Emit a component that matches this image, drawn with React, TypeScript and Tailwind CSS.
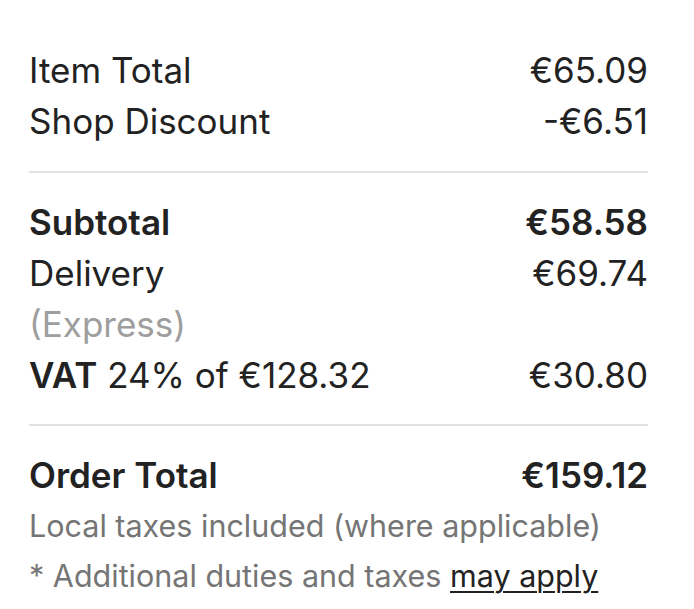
import React from "react"

type Line = {
  label: React.ReactNode
  value?: string
  bold?: boolean
}

const Row: React.FC<Line> = ({ label, value, bold }) => (
  <div className={`flex justify-between ${bold ? "font-semibold" : ""}`}>
    <span>{label}</span>
    {value && <span>{value}</span>}
  </div>
)

const App: React.FC = () => {
  return (
    <div
      className="bg-white w-[694px] h-[609px] pl-[29px] pr-[46px] pt-[45px] text-[#222222] text-[35px] leading-[51px]"
      style={{ fontFamily: "Inter, 'Liberation Sans', sans-serif" }}
    >
      <Row label="Item Total" value="€65.09" />
      <Row label="Shop Discount" value="-€6.51" />

      <div className="h-[2px] bg-[#e1e1e1] mt-[24px] mb-[24px]"></div>

      <Row label="Subtotal" value="€58.58" bold />
      <Row label="Delivery" value="€69.74" />
      <div className="text-[#9e9e9e]">(Express)</div>
      <Row
        label={
          <>
            <span className="font-semibold">VAT</span> 24% of €128.32
          </>
        }
        value="€30.80"
      />

      <div className="h-[2px] bg-[#e1e1e1] mt-[23px] mb-[24px]"></div>

      <Row label="Order Total" value="€159.12" bold />
      <div className="text-[#757575] text-[30.5px] leading-[50px] whitespace-nowrap">
        <div>Local taxes included (where applicable)</div>
        <div>
          * Additional duties and taxes{" "}
          <a
            className="text-[#222222] underline decoration-[2px] underline-offset-[4px]"
            href="#"
          >
            may apply
          </a>
        </div>
      </div>
    </div>
  )
}

export default App
